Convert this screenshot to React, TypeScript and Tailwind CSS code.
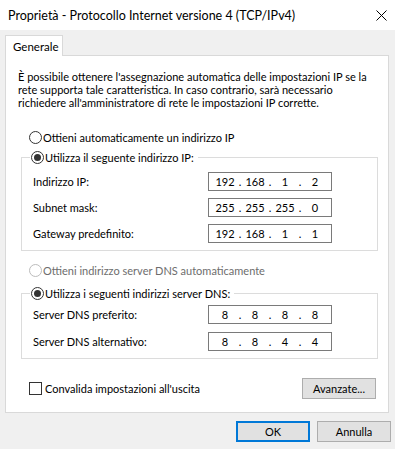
import React from "react";

function Radio({ checked = false, disabled = false }: { checked?: boolean; disabled?: boolean }) {
  return (
    <span
      className={
        "inline-flex w-[13px] h-[13px] rounded-full border items-center justify-center bg-white shrink-0 " +
        (disabled ? "border-[#bcbcbc]" : "border-[#333333]")
      }
    >
      {checked && <span className="w-[7px] h-[7px] rounded-full bg-[#333333]" />}
    </span>
  );
}

function IpBox({ parts }: { parts: string[] }) {
  return (
    <div className="w-[124px] h-[19px] border border-[#7a7a7a] bg-white flex items-center px-px">
      {parts.map((p, i) => (
        <React.Fragment key={i}>
          {i > 0 && <span className="w-0 flex justify-center">.</span>}
          <span className="flex-1 text-center">{p}</span>
        </React.Fragment>
      ))}
    </div>
  );
}

function Row({ label, parts, className = "" }: { label: string; parts: string[]; className?: string }) {
  return (
    <div className={"flex items-center " + className}>
      <span className="flex-1">{label}</span>
      <IpBox parts={parts} />
    </div>
  );
}

export default function App() {
  return (
    <div
      className="w-[395px] h-[449px] bg-[#f0f0f0] text-black text-[11px] leading-[13px] overflow-hidden"
      style={{ fontFamily: 'Lato, "Noto Sans", sans-serif' }}
    >
      {/* title bar */}
      <div className="h-[30px] bg-white flex items-center justify-between pl-[8px] pr-[8px]">
        <span className="text-[12.5px]">Proprietà - Protocollo Internet versione 4 (TCP/IPv4)</span>
        <svg width="11" height="11" viewBox="0 0 11 11">
          <path d="M0.5 0.5 L10.5 10.5 M10.5 0.5 L0.5 10.5" stroke="#000" strokeWidth="1" />
        </svg>
      </div>

      {/* tab */}
      <div className="pt-[5px] pl-[5px] flex">
        <div className="relative z-10 -mb-px w-[58px] h-[21px] border border-b-0 border-[#d9d9d9] bg-white flex items-center pl-[7px] text-[11.5px]">
          Generale
        </div>
      </div>

      {/* panel */}
      <div className="ml-[5px] w-[384px] h-[358px] border border-[#d9d9d9] bg-white flex flex-col">
        <div className="mt-[14px] pl-[12px]">
          <div className="whitespace-nowrap">È possibile ottenere l'assegnazione automatica delle impostazioni IP se la</div>
          <div className="whitespace-nowrap">rete supporta tale caratteristica. In caso contrario, sarà necessario</div>
          <div className="whitespace-nowrap">richiedere all'amministratore di rete le impostazioni IP corrette.</div>
        </div>

        <div className="mt-[22px] ml-[23px] flex items-center gap-[1px]">
          <Radio />
          <span>Ottieni automaticamente un indirizzo IP</span>
        </div>

        <fieldset className="mt-[7px] ml-[15px] w-[357px] border border-[#dcdcdc] p-0">
          <legend className="ml-[8px] pl-px pr-[4px] flex items-center gap-[1px]">
            <Radio checked />
            <span>Utilizza il seguente indirizzo IP:</span>
          </legend>
          <div className="pl-[11px] pr-[45px] pb-[7px]">
            <Row className="mt-[8px]" label="Indirizzo IP:" parts={["192", "168", "1", "2"]} />
            <Row className="mt-[7px]" label="Subnet mask:" parts={["255", "255", "255", "0"]} />
            <Row className="mt-[7px]" label="Gateway predefinito:" parts={["192", "168", "1", "1"]} />
          </div>
        </fieldset>

        <div className="mt-[13px] ml-[23px] flex items-center gap-[1px] text-[#6d6d6d]">
          <Radio disabled />
          <span>Ottieni indirizzo server DNS automaticamente</span>
        </div>

        <fieldset className="mt-[10px] ml-[15px] w-[357px] border border-[#dcdcdc] p-0">
          <legend className="ml-[8px] pl-px pr-[4px] flex items-center gap-[1px]">
            <Radio checked />
            <span>Utilizza i seguenti indirizzi server DNS:</span>
          </legend>
          <div className="pl-[11px] pr-[45px] pb-[7px]">
            <Row className="mt-[5px]" label="Server DNS preferito:" parts={["8", "8", "8", "8"]} />
            <Row className="mt-[8px]" label="Server DNS alternativo:" parts={["8", "8", "4", "4"]} />
          </div>
        </fieldset>

        <div className="mt-[19px] ml-[23px] mr-[12px] flex items-center justify-between">
          <div className="flex items-center gap-[3px]">
            <span className="w-[13px] h-[13px] border border-[#333333] bg-white" />
            <span>Convalida impostazioni all'uscita</span>
          </div>
          <button className="w-[74px] h-[21px] border border-[#adadad] bg-[#e1e1e1] flex items-center justify-center">
            Avanzate...
          </button>
        </div>
      </div>

      {/* bottom buttons */}
      <div className="mt-[8px] pr-[4px] flex justify-end gap-[7px]">
        <button className="w-[74px] h-[21px] border-2 border-[#0078d7] bg-[#e1e1e1] flex items-center justify-center">
          OK
        </button>
        <button className="w-[74px] h-[21px] border border-[#adadad] bg-[#e1e1e1] flex items-center justify-center">
          Annulla
        </button>
      </div>
    </div>
  );
}
